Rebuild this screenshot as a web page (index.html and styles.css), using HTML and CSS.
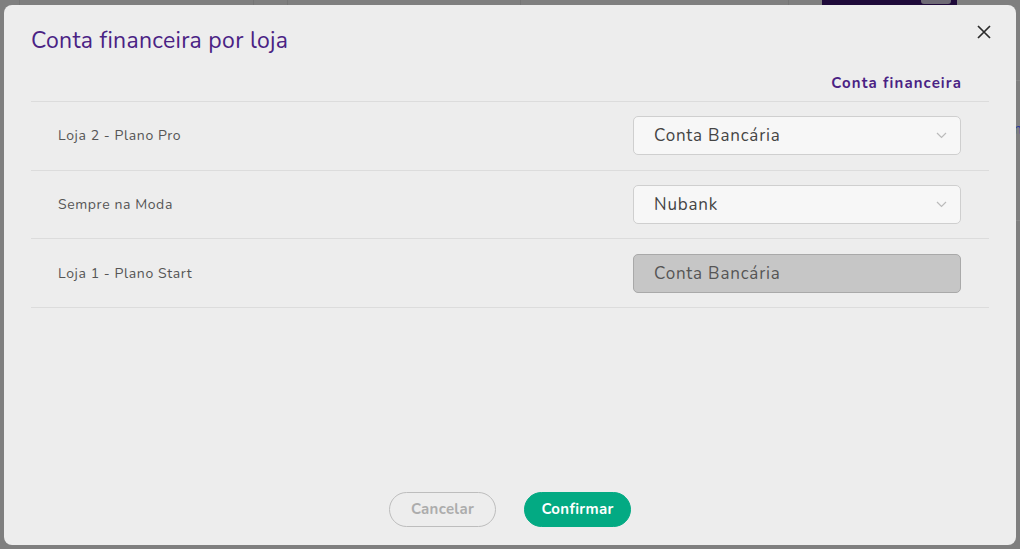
FILE: index.html
```html
<!DOCTYPE html>
<html lang="pt-BR">
<head>
<meta charset="utf-8">
<title>Conta financeira por loja</title>
<link rel="stylesheet" href="styles.css">
</head>
<body>
<div class="backdrop">
  <div class="bg-line l1"></div>
  <div class="bg-line l2"></div>
  <div class="bg-line l3"></div>
  <div class="bg-line l4"></div>
  <div class="bg-line l5"></div>
  <div class="bg-block"><span class="bg-pill"></span></div>
  <div class="bg-hline h1"></div>
  <div class="bg-hline h2"></div>
  <div class="bg-text">n</div>
</div>
<div class="modal">
  <div class="modal-head">
    <h1 class="modal-title">Conta financeira por loja</h1>
    <button class="close" aria-label="Fechar">
      <svg width="14" height="14" viewBox="0 0 14 14"><path d="M1 1L13 13M13 1L1 13" stroke="#2b2b2b" stroke-width="1.7" fill="none"/></svg>
    </button>
  </div>
  <div class="table">
    <div class="table-head"><span>Conta financeira</span></div>
    <div class="row">
      <span class="label">Loja 2 - Plano Pro</span>
      <div class="select"><span>Conta Bancária</span><svg class="chev" width="11" height="7" viewBox="0 0 11 7"><path d="M1 1L5.5 5.5L10 1" stroke="#bbb" stroke-width="1.2" fill="none"/></svg></div>
    </div>
    <div class="row">
      <span class="label">Sempre na Moda</span>
      <div class="select"><span>Nubank</span><svg class="chev" width="11" height="7" viewBox="0 0 11 7"><path d="M1 1L5.5 5.5L10 1" stroke="#bbb" stroke-width="1.2" fill="none"/></svg></div>
    </div>
    <div class="row">
      <span class="label">Loja 1 - Plano Start</span>
      <div class="select disabled"><span>Conta Bancária</span></div>
    </div>
  </div>
  <div class="actions">
    <button class="btn btn-cancel">Cancelar</button>
    <button class="btn btn-confirm">Confirmar</button>
  </div>
</div>
</body>
</html>
```
FILE: styles.css
```css
* { box-sizing: border-box; }
html, body { margin: 0; height: 100%; }
body {
  background: #7f7f7f;
  font-family: "Nunito", "Lato", "Open Sans", sans-serif;
  padding: 5px 4px 4px 4px;
  position: relative;
  overflow: hidden;
}
.backdrop { position: absolute; inset: 0; }
.bg-line { position: absolute; top: 0; width: 1px; height: 5px; background: #767676; }
.l1 { left: 19px; } .l2 { left: 253px; } .l3 { left: 287px; } .l4 { left: 520px; } .l5 { left: 788px; }
.bg-block { position: absolute; left: 822px; top: 0; width: 135px; height: 5px; background: #1f0a3a; }
.bg-pill { position: absolute; left: 99px; top: -4px; width: 30px; height: 8px; border-radius: 3px; background: #6e6a75; }
.bg-hline { position: absolute; right: 0; width: 4px; height: 1px; background: #8a8a8a; }
.h1 { top: 80px; } .h2 { top: 220px; }
.bg-text { position: absolute; right: -2px; top: 119px; color: #2b3c9a; font-size: 15px; }

.modal {
  position: relative;
  height: 540px;
  background: #ededed;
  border-radius: 8px;
  padding: 0 27px 18px 27px;
  display: flex;
  flex-direction: column;
}
.modal-head {
  display: flex;
  justify-content: space-between;
  align-items: flex-start;
  height: 63px;
}
.modal-title {
  margin: 20px 0 0 0;
  font-size: 23px;
  font-weight: 400;
  color: #4a2284;
  letter-spacing: 0.3px;
}
.close {
  border: 0;
  background: none;
  padding: 0;
  margin: 20px -2px 0 0;
  width: 14px;
  height: 14px;
  display: flex;
  cursor: pointer;
}
.table-head {
  display: flex;
  justify-content: flex-end;
  padding: 0 28px 0 0;
  height: 34px;
  border-bottom: 1px solid #dcdcdc;
}
.table-head span {
  font-size: 15px;
  font-weight: 700;
  color: #4a2284;
  letter-spacing: 1.1px;
  line-height: 30px;
  margin-right: -1px;
}
.row {
  height: 68.7px;
  display: flex;
  align-items: center;
  justify-content: space-between;
  padding: 0 28px 0 27px;
  border-bottom: 1px solid #dcdcdc;
}
.label {
  font-size: 14px;
  color: #555;
  letter-spacing: 0.6px;
}
.select {
  width: 328px;
  height: 39px;
  border: 1px solid #cfcfcf;
  border-radius: 5px;
  background: #f7f7f7;
  display: flex;
  align-items: center;
  justify-content: space-between;
  padding: 0 13px 0 20px;
  font-size: 17px;
  color: #444;
  letter-spacing: 0.8px;
}
.select.disabled {
  background: #c6c6c6;
  border-color: #a9a9a9;
  color: #555;
}
.chev { display: block; }
.actions {
  margin-top: auto;
  display: flex;
  justify-content: center;
  gap: 28px;
}
.btn {
  width: 107px;
  height: 35px;
  border-radius: 18px;
  font-family: inherit;
  font-size: 15px;
  font-weight: 700;
  letter-spacing: 0.3px;
  cursor: pointer;
  padding: 0 0 1px 0;
}
.btn-cancel {
  background: transparent;
  border: 1px solid #bdbdbd;
  color: #acacac;
}
.btn-confirm {
  background: #03aa83;
  border: 1px solid #03aa83;
  color: #fff;
}
```
